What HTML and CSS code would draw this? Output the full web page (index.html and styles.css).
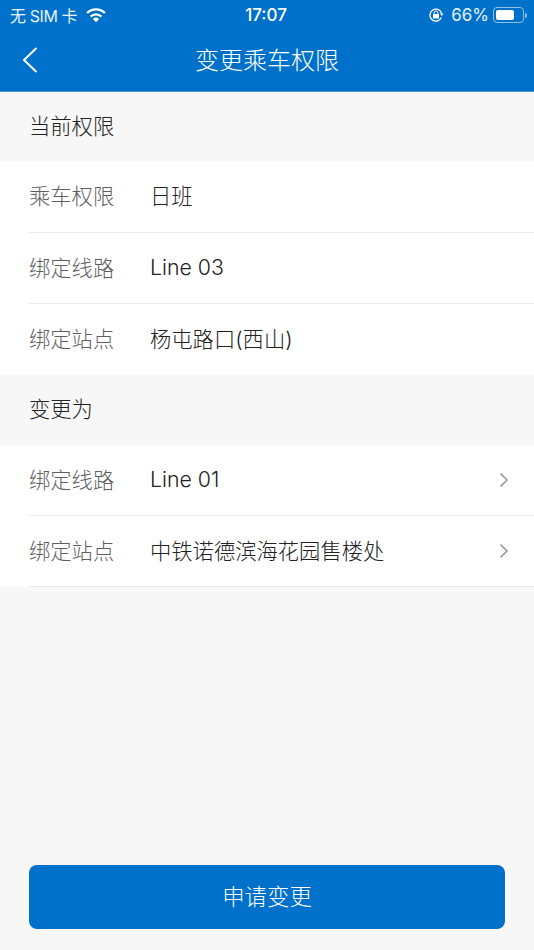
FILE: index.html
```html
<!DOCTYPE html>
<html lang="zh-CN">
<head>
<meta charset="utf-8">
<title>变更乘车权限</title>
<link rel="stylesheet" href="styles.css">
</head>
<body>
<div class="page">
  <header class="top">
    <div class="status">
      <div class="status-left">
        <span class="carrier">无 SIM 卡</span>
        <svg class="wifi" width="22" height="16" viewBox="0 0 22 16"><path d="M11 15.2 L7.9 11.9 A4.4 4.4 0 0 1 14.1 11.9 Z" fill="#fff"/><path d="M5.6 9.6 A7.7 7.7 0 0 1 16.4 9.6" fill="none" stroke="#fff" stroke-width="2.2"/><path d="M2.1 6 A12.6 12.6 0 0 1 19.9 6" fill="none" stroke="#fff" stroke-width="2.3"/></svg>
      </div>
      <div class="status-time">17:07</div>
      <div class="status-right">
        <svg class="lock" width="16" height="16" viewBox="0 0 16 16"><path d="M13.6 6.2 A6 6 0 1 0 13.4 10.6" fill="none" stroke="#fff" stroke-width="1.3"/><path d="M11.9 6.6 L15.6 6.6 L13.7 9 Z" fill="#fff"/><rect x="5" y="7" width="6" height="4.6" rx=".6" fill="#fff"/><path d="M6.1 7 V5.9 A1.9 1.9 0 0 1 9.9 5.9 V7" fill="none" stroke="#fff" stroke-width="1"/></svg>
        <span class="pct">66%</span>
        <div class="battery"><div class="battery-fill"></div></div>
        <div class="battery-cap"></div>
      </div>
    </div>
    <div class="nav">
      <svg class="back" width="18" height="28" viewBox="0 0 18 28"><path d="M15.5 2 L3 14 L15.5 26" fill="none" stroke="#fff" stroke-width="2"/></svg>
      <div class="title">变更乘车权限</div>
    </div>
  </header>

  <div class="section">当前权限</div>
  <div class="group">
    <div class="row first"><span class="label">乘车权限</span><span class="value">日班</span></div>
    <div class="row"><span class="label">绑定线路</span><span class="value latin">Line 03</span></div>
    <div class="row plain"><span class="label">绑定站点</span><span class="value">杨屯路口(西山)</span></div>
  </div>

  <div class="section second">变更为</div>
  <div class="group">
    <div class="row"><span class="label">绑定线路</span><span class="value latin">Line 01</span>
      <svg class="chev" width="10" height="16" viewBox="0 0 10 16"><path d="M1.5 1.5 L8 8 L1.5 14.5" fill="none" stroke="#9a9a9a" stroke-width="1.7"/></svg></div>
    <div class="row"><span class="label">绑定站点</span><span class="value">中铁诺德滨海花园售楼处</span>
      <svg class="chev" width="10" height="16" viewBox="0 0 10 16"><path d="M1.5 1.5 L8 8 L1.5 14.5" fill="none" stroke="#9a9a9a" stroke-width="1.7"/></svg></div>
  </div>

  <div class="spacer"></div>
  <div class="footer"><div class="submit">申请变更</div></div>
</div>
</body>
</html>
```

FILE: styles.css
```css
* { box-sizing: border-box; }
html, body { margin: 0; padding: 0; }
body {
  font-family: "Inter", "Noto Sans CJK SC", sans-serif;
  font-weight: 300;
  background: #f7f7f7;
}
.page {
  width: 534px;
  height: 950px;
  display: flex;
  flex-direction: column;
  overflow: hidden;
}
.top {
  height: 92px;
  flex: none;
  background: #0071ca;
  color: #fff;
  border-bottom: 1px solid #4a97d8;
}
.status {
  height: 30px;
  padding: 0 7px 0 10px;
  display: grid;
  grid-template-columns: 1fr auto 1fr;
  align-items: center;
  font-size: 16px;
  font-weight: 400;
}
.status-left { display: flex; align-items: center; gap: 8px; color: #e9f3fb; }
.carrier { letter-spacing: -0.4px; }
.status-time { font-weight: 500; font-size: 17px; margin-right: 5px; }
.status-right { display: flex; align-items: center; justify-content: flex-end; }
.lock { margin-right: 7px; }
.pct { margin-right: 4px; font-size: 17px; color: #e9f3fb; }
.battery {
  width: 31px;
  height: 16px;
  border: 1px solid #8fc0e8;
  border-radius: 4px;
  padding: 2px;
}
.battery-fill { width: 18px; height: 100%; background: #fff; border-radius: 2px; }
.battery-cap { width: 2px; height: 5px; margin-left: 1px; background: #8fc0e8; border-radius: 0 2px 2px 0; }
.nav {
  height: 61px;
  display: flex;
  align-items: center;
  justify-content: center;
  position: relative;
}
.back { position: absolute; left: 21px; top: 16px; }
.title { font-size: 24px; line-height: 61px; height: 61px; color: #fff; }
.section {
  height: 69px;
  flex: none;
  padding-left: 29px;
  padding-bottom: 5px;
  display: flex;
  align-items: center;
  font-size: 21.3px;
  color: #222;
}
.section.second { height: 70px; }
.group { background: #fff; flex: none; }
.row {
  height: 71px;
  margin-left: 29px;
  padding-bottom: 4px;
  display: flex;
  align-items: center;
  border-bottom: 1px solid #e9e9e9;
  font-size: 21.3px;
  position: relative;
}
.row.first { height: 72px; }
.row.plain { border-bottom: 0; height: 71px; }
.label { width: 121px; flex: none; color: #5f5f5f; }
.value { color: #222; }
.value.latin { padding-top: 2px; }
.chev { position: absolute; right: 25px; top: 27px; }
.spacer { flex: 1; }
.footer { padding: 0 29px 21px; }
.submit {
  height: 64px;
  background: #0071ca;
  border-radius: 8px;
  color: #fff;
  font-size: 22.4px;
  padding-bottom: 5px;
  display: flex;
  align-items: center;
  justify-content: center;
}
```
